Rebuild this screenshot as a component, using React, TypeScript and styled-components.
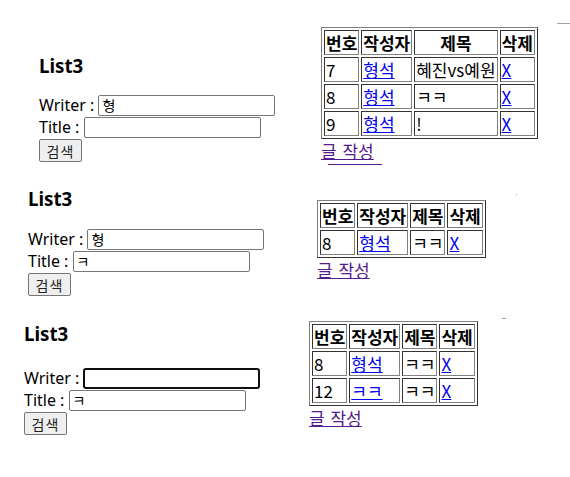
import React from "react";
import styled, { createGlobalStyle } from "styled-components";

const Global = createGlobalStyle`
  html, body { margin: 0; padding: 0; background: #fff; }
  body {
    font-family: "Noto Sans", "Noto Sans CJK KR", sans-serif;
    font-size: 16px;
    color: #000;
    width: 570px;
    height: 477px;
    overflow: hidden;
  }
`;

const Page = styled.div`
  display: flex;
  flex-direction: column;
  width: 570px;
  height: 477px;
  position: relative;
`;

const Shot = styled.section<{ $h: number; $left: number }>`
  display: flex;
  align-items: flex-start;
  height: ${(p) => p.$h}px;
  padding-left: ${(p) => p.$left}px;
  box-sizing: border-box;
  position: relative;
`;

const FormCol = styled.div<{ $w: number; $top: number }>`
  width: ${(p) => p.$w}px;
  padding-top: ${(p) => p.$top}px;
  display: flex;
  flex-direction: column;
  flex-shrink: 0;
`;

const Heading = styled.h3<{ $gap: number }>`
  margin: 0 0 ${(p) => p.$gap}px 0;
  font-family: "Noto Sans", "Noto Sans CJK KR", sans-serif;
  font-size: 18.72px;
  font-weight: 700;
  line-height: 24px;
`;

const FieldRow = styled.div`
  display: flex;
  align-items: center;
  height: 22px;
  white-space: pre;
  line-height: 20px;
`;

const TextInput = styled.input<{ $focused?: boolean }>`
  box-sizing: border-box;
  width: 177px;
  height: 21px;
  margin: 0;
  padding: 1px 3px;
  border: ${(p) => (p.$focused ? "2px solid #101010" : "1px solid #767676")};
  border-radius: ${(p) => (p.$focused ? 3 : 2)}px;
  outline: none;
  font-family: "Noto Sans CJK KR", "Noto Sans", sans-serif;
  font-size: 14px;
  color: #000;
  background: #fff;
`;

const SearchButton = styled.button`
  box-sizing: border-box;
  width: 43px;
  height: 23px;
  margin: 1px 0 0 0;
  padding: 0;
  border: 1px solid #767676;
  border-radius: 2px;
  background: #efefef;
  font-family: "Noto Sans CJK KR", sans-serif;
  font-size: 14px;
  letter-spacing: 1px;
  color: #222;
  align-self: flex-start;
`;

const TableCol = styled.div<{ $top: number }>`
  padding-top: ${(p) => p.$top}px;
  display: flex;
  flex-direction: column;
  align-items: flex-start;
`;

const Board = styled.table`
  border-collapse: separate;
  border-spacing: 2px;
  border: 1px solid;
  border-color: #808080 #333 #333 #808080;
  font-family: "Noto Sans CJK KR", "Noto Sans", sans-serif;
  font-size: 17px;
  line-height: 21px;
`;

const HeadCell = styled.th`
  border: 1px solid;
  border-color: #333 #808080 #808080 #333;
  padding: 1px;
  font-weight: 700;
  text-align: center;
  white-space: nowrap;
`;

const Cell = styled.td`
  border: 1px solid;
  border-color: #333 #808080 #808080 #333;
  padding: 1px;
  text-align: left;
  white-space: nowrap;
`;

const BlueLink = styled.a`
  color: #0000ee;
  text-decoration: underline;
`;

const WriteLink = styled.a`
  color: #551a8b;
  text-decoration: underline;
  font-family: "Noto Sans CJK KR", sans-serif;
  font-size: 17px;
  line-height: 20px;
  word-spacing: 2px;
  margin-top: 2px;
`;

const Mark = styled.span<{ $x: number; $y: number; $w: number; $h: number; $c: string }>`
  position: absolute;
  left: ${(p) => p.$x}px;
  top: ${(p) => p.$y}px;
  width: ${(p) => p.$w}px;
  height: ${(p) => p.$h}px;
  background: ${(p) => p.$c};
`;

type Row = { no: string; writer: string; title: string };

interface ShotProps {
  h: number;
  left: number;
  tableLeft: number;
  formTop: number;
  headGap: number;
  tableTop: number;
  writer: string;
  title: string;
  focused?: boolean;
  rows: Row[];
  children?: React.ReactNode;
}

function ListShot(p: ShotProps) {
  return (
    <Shot $h={p.h} $left={p.left}>
      <FormCol $w={p.tableLeft - p.left} $top={p.formTop}>
        <Heading $gap={p.headGap}>List3</Heading>
        <FieldRow>
          {"Writer : "}
          <TextInput $focused={p.focused} defaultValue={p.writer} />
        </FieldRow>
        <FieldRow>
          {"Title : "}
          <TextInput defaultValue={p.title} />
        </FieldRow>
        <SearchButton>검색</SearchButton>
      </FormCol>
      <TableCol $top={p.tableTop}>
        <Board>
          <tbody>
            <tr>
              <HeadCell>번호</HeadCell>
              <HeadCell>작성자</HeadCell>
              <HeadCell>제목</HeadCell>
              <HeadCell>삭제</HeadCell>
            </tr>
            {p.rows.map((r) => (
              <tr key={r.no}>
                <Cell>{r.no}</Cell>
                <Cell>
                  <BlueLink href="#">{r.writer}</BlueLink>
                </Cell>
                <Cell>{r.title}</Cell>
                <Cell>
                  <BlueLink href="#">X</BlueLink>
                </Cell>
              </tr>
            ))}
          </tbody>
        </Board>
        <WriteLink href="#">글 작성</WriteLink>
      </TableCol>
      {p.children}
    </Shot>
  );
}

export default function App() {
  return (
    <Page>
      <Global />
      <ListShot
        h={170}
        left={39}
        tableLeft={321}
        formTop={54}
        headGap={16}
        tableTop={27}
        writer="형"
        title=""
        rows={[
          { no: "7", writer: "형석", title: "혜진vs예원" },
          { no: "8", writer: "형석", title: "ㅋㅋ" },
          { no: "9", writer: "형석", title: "!" },
        ]}
      >
        <Mark $x={557} $y={23} $w={13} $h={1} $c="#a0a0a0" />
        <Mark $x={328} $y={164} $w={54} $h={1} $c="#551a8b" />
      </ListShot>
      <ListShot
        h={140}
        left={28}
        tableLeft={317}
        formTop={17}
        headGap={17}
        tableTop={30}
        writer="형"
        title="ㅋ"
        rows={[{ no: "8", writer: "형석", title: "ㅋㅋ" }]}
      >
        <Mark $x={516} $y={24} $w={1} $h={1} $c="#a0a0a0" />
      </ListShot>
      <ListShot
        h={167}
        left={24}
        tableLeft={309}
        formTop={12}
        headGap={21}
        tableTop={11}
        writer=""
        title="ㅋ"
        focused
        rows={[
          { no: "8", writer: "형석", title: "ㅋㅋ" },
          { no: "12", writer: "ㅋㅋ", title: "ㅋㅋ" },
        ]}
      >
        <Mark $x={502} $y={8} $w={4} $h={1} $c="#a0a0a0" />
      </ListShot>
    </Page>
  );
}
